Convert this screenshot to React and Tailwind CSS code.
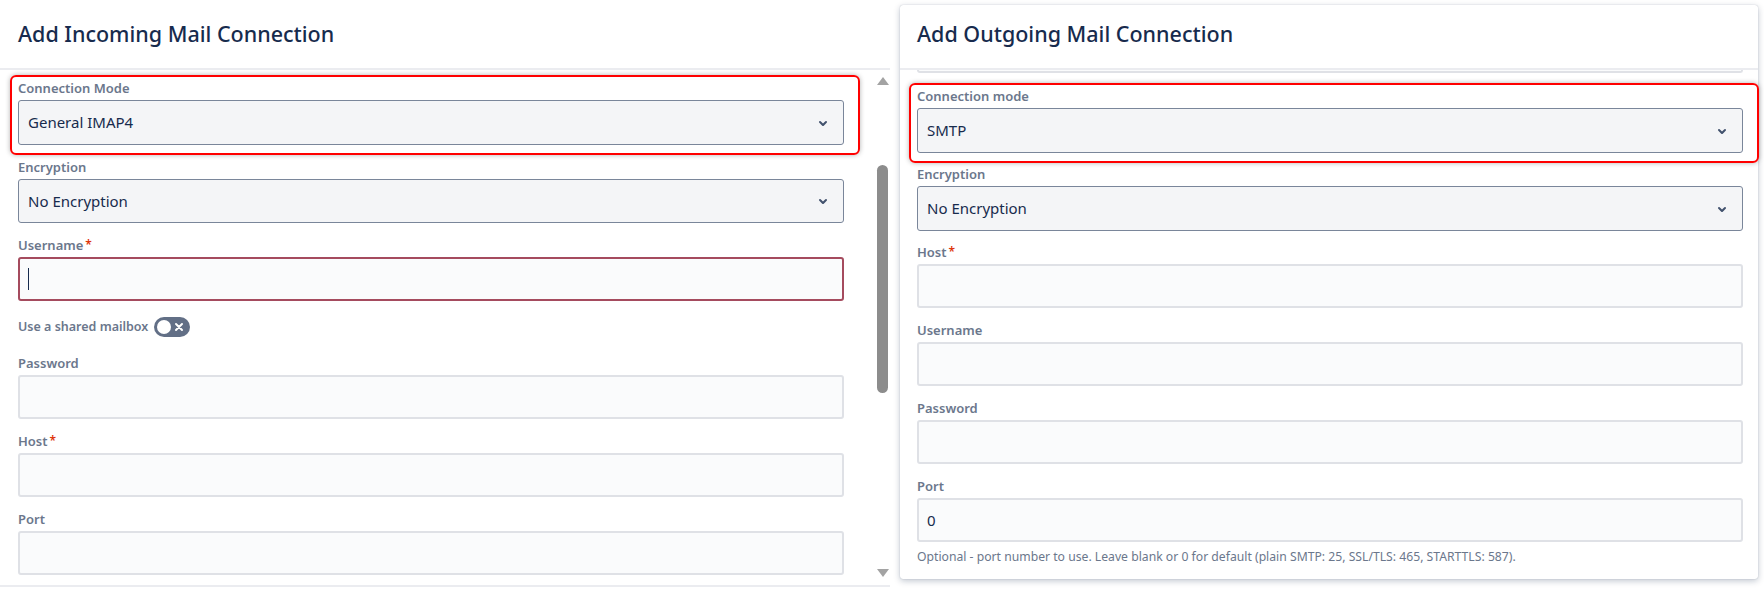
import React from "react";

const Chevron = () => (
  <svg width="24" height="24" viewBox="0 0 24 24" className="shrink-0">
    <path
      fill="#42526e"
      d="M8.292 10.293a1.009 1.009 0 0 0 0 1.419l2.939 2.965c.218.215.5.322.779.322s.556-.107.769-.322l2.93-2.955a1.01 1.01 0 0 0 0-1.419.987.987 0 0 0-1.406 0l-2.298 2.317-2.307-2.327a.99.99 0 0 0-1.406 0z"
    />
  </svg>
);

const Label = ({ children, required }) => (
  <div className="h-[16px] leading-[16px] text-[13px] font-semibold text-[#6b778c] mb-[4px] whitespace-nowrap">
    {children}
    {required && <span className="text-[#de350b] ml-[2px] align-top text-[12px]">*</span>}
  </div>
);

const Select = ({ value, h = "h-[45px]" }) => (
  <div className={`${h} flex items-center justify-between rounded-[3px] border border-[#7a869a] bg-[#f4f5f7] pl-[9px] pr-[8px] text-[15px] text-[#172b4d]`}>
    <span>{value}</span>
    <Chevron />
  </div>
);

const Input = ({ value, invalid, cursor }) => (
  <div
    className={`h-[44px] flex items-center rounded-[3px] border-2 ${
      invalid ? "border-[#a54b5e]" : "border-[#dfe1e6]"
    } bg-[#fafbfc] pl-[8px] text-[15px] text-[#172b4d]`}
  >
    {cursor && <div className="w-[1px] h-[22px] bg-[#172b4d]" />}
    {value}
  </div>
);

const RedBox = () => (
  <div className="absolute -top-[5px] -bottom-[10px] -left-[8px] -right-[16px] rounded-[6px] border-2 border-[#ff0000] shadow-[0_0_5px_rgba(0,0,0,0.3)] pointer-events-none" />
);

const Toggle = () => (
  <div className="w-[36px] h-[20px] rounded-full bg-[#626f86] flex items-center justify-between px-[3px]">
    <div className="w-[14px] h-[14px] rounded-full bg-white" />
    <svg width="12" height="12" viewBox="0 0 12 12" className="mr-[2px]">
      <path d="M3 3l6 6M9 3l-6 6" stroke="white" strokeWidth="2" strokeLinecap="round" />
    </svg>
  </div>
);

const Scrollbar = () => (
  <div className="w-[15px] flex flex-col items-center pt-[7px] pb-[8px]">
    <svg width="12" height="8" viewBox="0 0 12 8">
      <path d="M6 0L12 8H0z" fill="#a3a3a3" />
    </svg>
    <div className="mt-[80px] w-[11px] h-[228px] rounded-full bg-[#8c8c8c]" />
    <div className="flex-1" />
    <svg width="12" height="8" viewBox="0 0 12 8">
      <path d="M0 0H12L6 8z" fill="#a3a3a3" />
    </svg>
  </div>
);

export default function App() {
  return (
    <div className="flex w-[1764px] h-[589px] bg-white font-['Noto_Sans',sans-serif] overflow-hidden">
      {/* Left panel */}
      <div className="w-[890px] h-[587px] flex flex-col border-b-2 border-[#ebecf0] shrink-0">
        <div className="h-[70px] shrink-0 flex items-center px-[18px] border-b-2 border-[#ebecf0]">
          <h1 className="text-[21.5px] font-medium text-[#172b4d]">Add Incoming Mail Connection</h1>
        </div>
        <div className="flex-1 flex min-h-0">
          <div className="flex-1 pl-[18px] pr-[31px] pt-[10px] flex flex-col">
            <div className="relative">
              <RedBox />
              <Label>Connection Mode</Label>
              <Select value="General IMAP4" />
            </div>
            <div className="mt-[14px]">
              <Label>Encryption</Label>
              <Select value="No Encryption" h="h-[44px]" />
            </div>
            <div className="mt-[14px]">
              <Label required>Username</Label>
              <Input invalid cursor />
            </div>
            <div className="mt-[16px] h-[20px] flex items-center gap-[6px]">
              <span className="text-[12.5px] font-semibold text-[#6b778c]">Use a shared mailbox</span>
              <Toggle />
            </div>
            <div className="mt-[18px]">
              <Label>Password</Label>
              <Input />
            </div>
            <div className="mt-[14px]">
              <Label required>Host</Label>
              <Input />
            </div>
            <div className="mt-[14px]">
              <Label>Port</Label>
              <Input />
            </div>
          </div>
          <Scrollbar />
        </div>
      </div>

      {/* Right card */}
      <div className="ml-[10px] mt-[5px] w-[858px] self-start bg-white rounded-[3px] shadow-[0_2px_6px_rgba(9,30,66,0.25),0_0_1px_rgba(9,30,66,0.31)] flex flex-col">
        <div className="h-[65px] flex items-center px-[17px] border-b-2 border-[#ebecf0]">
          <h1 className="text-[21.5px] font-medium text-[#172b4d] mt-[-5px]">Add Outgoing Mail Connection</h1>
        </div>
        <div className="pl-[17px] pr-[15px] pb-[14px] flex flex-col">
          <div className="h-[3px] rounded-b-[3px] border-x-2 border-b-2 border-[#dfe1e6] bg-[#fafbfc]" />
          <div className="relative mt-[15px]">
            <RedBox />
            <Label>Connection mode</Label>
            <Select value="SMTP" />
          </div>
          <div className="mt-[13px]">
            <Label>Encryption</Label>
            <Select value="No Encryption" />
          </div>
          <div className="mt-[13px]">
            <Label required>Host</Label>
            <Input />
          </div>
          <div className="mt-[14px]">
            <Label>Username</Label>
            <Input />
          </div>
          <div className="mt-[14px]">
            <Label>Password</Label>
            <Input />
          </div>
          <div className="mt-[14px]">
            <Label>Port</Label>
            <Input value="0" />
          </div>
          <div className="mt-[7px] h-[16px] leading-[16px] text-[12.2px] text-[#6b778c] whitespace-nowrap">
            Optional - port number to use. Leave blank or 0 for default (plain SMTP: 25, SSL/TLS: 465, STARTTLS: 587).
          </div>
        </div>
      </div>
    </div>
  );
}
